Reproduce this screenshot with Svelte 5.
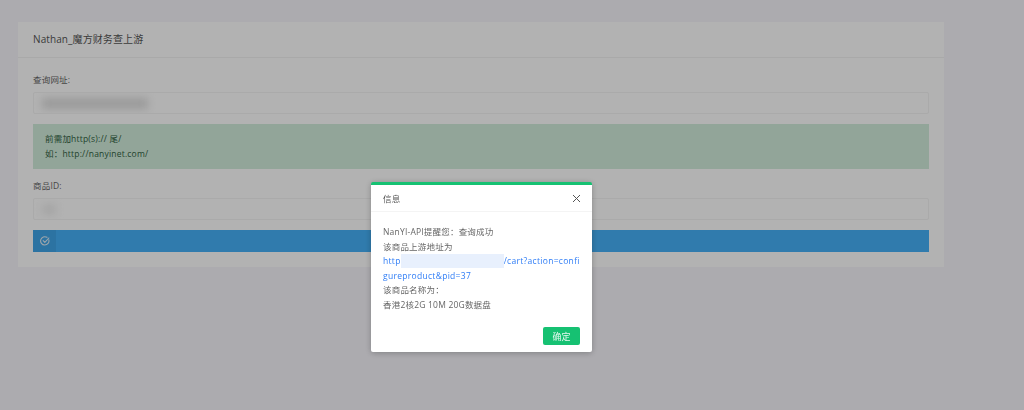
<script>
	let open = $state(true);
</script>

<div class="page">
	<section class="card">
		<h1 class="card-title">Nathan_魔方财务查上游</h1>
		<div class="card-body">
			<div class="field">
				<span class="label">查询网址:</span>
				<div class="input"><span class="smudge wide"></span></div>
			</div>
			<div class="alert">
				<div>前需加http(s):// 尾/</div>
				<div>如：http://nanyinet.com/</div>
			</div>
			<div class="field">
				<span class="label">商品ID:</span>
				<div class="input"><span class="smudge short"></span></div>
			</div>
			<button class="submit" type="button">
				<span class="submit-icon">
					<svg width="10" height="10" viewBox="0 0 12 12" fill="none" stroke="currentColor" stroke-width="1.3" stroke-linecap="round" stroke-linejoin="round">
						<path d="M10.6 4.6A5 5 0 1 1 8.4 1.6" />
						<path d="M3.8 5.6 5.8 7.6 10.6 2.4" />
					</svg>
				</span>
			</button>
		</div>
	</section>
</div>

{#if open}
	<div class="overlay"></div>
	<div class="dialog" role="dialog">
		<div class="dialog-head">
			<span>信息</span>
			<button class="close" type="button" aria-label="关闭" onclick={() => (open = false)}>
				<svg width="9" height="9" viewBox="0 0 9 9" stroke="currentColor" stroke-width="1" fill="none">
					<path d="M1 1 8 8M8 1 1 8" />
				</svg>
			</button>
		</div>
		<div class="dialog-body">
			<div>NanYI-API提醒您：查询成功</div>
			<div>该商品上游地址为</div>
			<div class="link">
				<span class="mask"></span>http<span class="gap"></span>/cart?action=confi<br />gureproduct&amp;pid=37
			</div>
			<div>该商品名称为：</div>
			<div>香港2核2G 10M 20G数据盘</div>
		</div>
		<div class="dialog-foot">
			<button class="ok" type="button" onclick={() => (open = false)}>确定</button>
		</div>
	</div>
{/if}

<style>
	:global(body) {
		margin: 0;
		height: 410px;
		overflow: hidden;
		background: #f6f5fb;
		font-family: 'Open Sans', 'Noto Sans CJK SC', sans-serif;
		font-size: 8.5px;
		letter-spacing: 0.2px;
		color: #666;
	}
	.page {
		padding: 22px 80px 0 18px;
	}
	.card {
		background: #fff;
		height: 245px;
		box-sizing: border-box;
	}
	.card-title {
		margin: 0;
		height: 36px;
		box-sizing: border-box;
		padding: 0 15px;
		border-bottom: 1px solid #f2f2f2;
		font-size: 10px;
		font-weight: 400;
		line-height: 35px;
		color: #555;
		letter-spacing: 0.1px;
	}
	.card-body {
		display: flex;
		flex-direction: column;
		padding: 15px 15px 0;
	}
	.field {
		display: flex;
		flex-direction: column;
		gap: 5px;
		margin-bottom: 10px;
	}
	.label {
		line-height: 14px;
		color: #666;
	}
	.input {
		height: 22px;
		box-sizing: border-box;
		border: 1px solid #f4f4f4;
		border-radius: 2px;
		position: relative;
		overflow: hidden;
	}
	.smudge {
		display: block;
		position: absolute;
		left: 8px;
		top: 5px;
		height: 11px;
		background: #dcdcdc;
		filter: blur(4px);
	}
	.smudge.wide {
		width: 106px;
	}
	.smudge.short {
		width: 14px;
		background: #ececec;
	}
	.alert {
		height: 45px;
		box-sizing: border-box;
		padding: 7px 12px;
		margin-bottom: 10px;
		background: #d2ecdc;
		color: #2f6140;
		line-height: 15px;
	}
	.submit {
		display: block;
		height: 22px;
		padding: 0;
		border: 0;
		background: #45b1f8;
		color: #fff;
		text-align: left;
	}
	.submit-icon {
		display: flex;
		align-items: center;
		justify-content: center;
		width: 23px;
		height: 22px;
		background: #40a5e8;
		color: #e4eef5;
	}
	.overlay {
		position: fixed;
		inset: 0;
		background: rgba(0, 0, 0, 0.3);
	}
	.dialog {
		position: fixed;
		left: 371px;
		top: 182px;
		width: 221px;
		height: 170px;
		box-sizing: border-box;
		display: flex;
		flex-direction: column;
		background: #fff;
		border-top: 3px solid #16c172;
		border-radius: 2px;
		box-shadow: 0 1px 6px rgba(0, 0, 0, 0.25);
	}
	.dialog-head {
		display: flex;
		align-items: center;
		justify-content: space-between;
		height: 26px;
		flex: none;
		padding: 0 11px 0 12px;
		border-bottom: 1px solid #f4f4f4;
		color: #555;
	}
	.close {
		display: flex;
		padding: 0;
		border: 0;
		background: none;
		color: #555;
		cursor: pointer;
	}
	.dialog-body {
		padding: 13px 12px 0;
		line-height: 14.6px;
		color: #666;
		flex: 1;
	}
	.link {
		color: #2f7df6;
		position: relative;
		white-space: nowrap;
		letter-spacing: 0.3px;
	}
	.gap {
		display: inline-block;
		width: 103px;
	}
	.mask {
		position: absolute;
		left: 18px;
		top: 0;
		width: 103px;
		height: 14px;
		background: #e8f0fd;
	}
	.dialog-foot {
		display: flex;
		justify-content: flex-end;
		padding: 0 12px 7px;
	}
	.ok {
		width: 37px;
		height: 18px;
		padding: 0;
		border: 0;
		border-radius: 2px;
		background: #16c172;
		color: #e6f8ef;
		font-family: inherit;
		font-size: 9px;
	}
</style>
